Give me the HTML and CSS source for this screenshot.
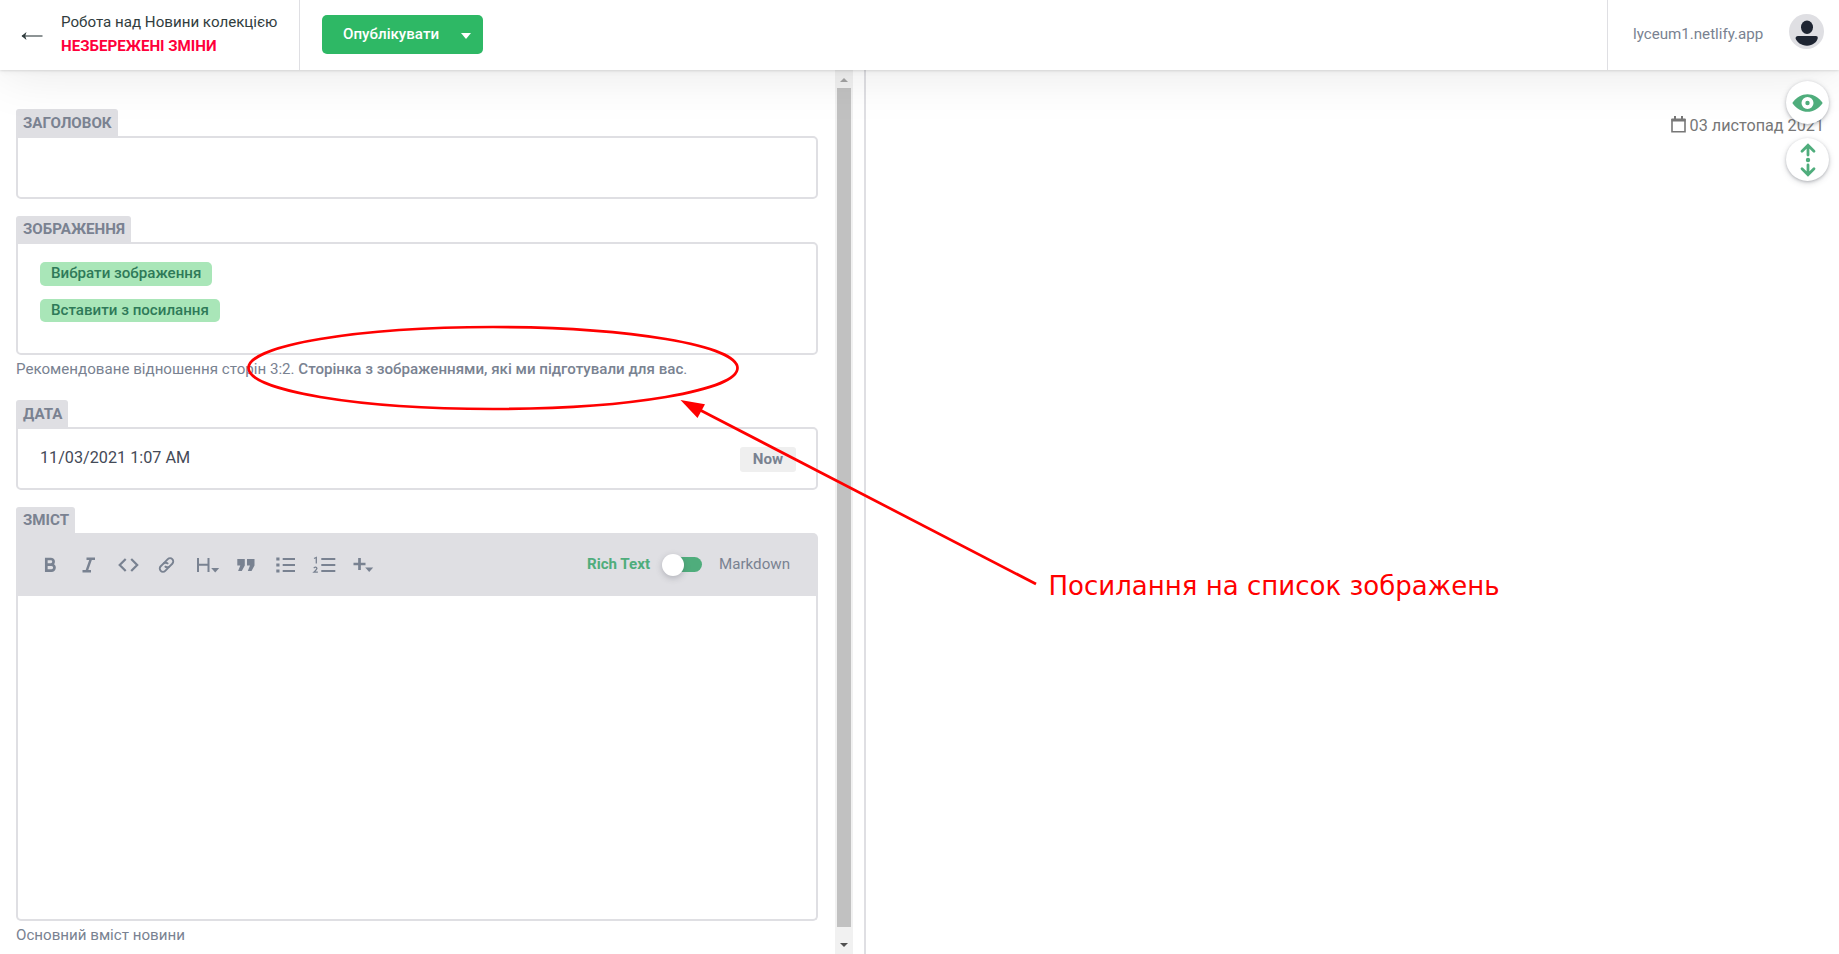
FILE: index.html
```html
<!DOCTYPE html>
<html lang="uk">
<head>
<meta charset="utf-8">
<title>Новини</title>
<link rel="stylesheet" href="styles.css">
</head>
<body>
<div class="app">
  <header class="topbar">
    <a class="back">
      <svg class="back-arrow" width="22" height="10" viewBox="0 0 22 10"><path d="M1 5H21.500" stroke="#313d3e" stroke-width="1.100" fill="none"/><path d="M.5 5L5.500 1L4.200 5L5.500 9Z" fill="#313d3e"/></svg>
      <span class="back-text">
        <span class="collection">Робота над Новини колекцією</span>
        <span class="unsaved">НЕЗБЕРЕЖЕНІ ЗМІНИ</span>
      </span>
    </a>
    <div class="actions">
      <button class="publish">Опублікувати<span class="caret"></span></button>
    </div>
    <div class="meta">
      <span class="site">lyceum1.netlify.app</span>
      <svg class="avatar" width="35" height="35" viewBox="0 0 35 35"><circle cx="17.5" cy="17.5" r="17.5" fill="#dfdfe3"/><ellipse cx="18" cy="13.2" rx="6" ry="6.7" fill="#1e2532"/><path d="M9 22h18q2 0 1.8 2c-.8 4-5 7.7-10.800 7.700S7.600 28 6.600 24.500Q6.500 22 9 22z" fill="#1e2532"/></svg>
    </div>
  </header>
  <main class="panes">
    <section class="editor">
      <div class="field title-field">
        <label class="tab">ЗАГОЛОВОК</label>
        <div class="box"></div>
      </div>
      <div class="field image-field">
        <label class="tab">ЗОБРАЖЕННЯ</label>
        <div class="box image-box">
          <button class="chip">Вибрати зображення</button>
          <button class="chip chip-link">Вставити з посилання</button>
        </div>
        <p class="hint">Рекомендоване відношення сторін 3:2. <b>Сторінка з зображеннями, які ми підготували для вас</b>.</p>
      </div>
      <div class="field date-field">
        <label class="tab">ДАТА</label>
        <div class="box date-box"><span>11/03/2021 1:07 AM</span><button class="now">Now</button></div>
      </div>
      <div class="field body-field">
        <label class="tab">ЗМІСТ</label>
        <div class="toolbar">
          <svg class="tools" width="340" height="20" viewBox="0 0 340 20" fill="none" stroke="#798291" stroke-width="2">
            <path d="M3.300 4H7.800a2.800 2.800 0 0 1 0 5.600H3.300zM3.300 9.600H8.500a3 3 0 0 1 0 6H3.300z" stroke-width="2.700"/>
            <path d="M43.500 3.700h8.500M39.500 16.300h8.500M48 3.700L43.500 16.300" stroke-width="2.500"/>
            <path d="M82.700 4L76.700 10L82.700 16M88.200 4L94.200 10L88.200 16" stroke-width="2.200"/>
            <g transform="translate(123.500 10) rotate(-45)" stroke-width="1.900"><path d="M1.500 3.200H-5a3.200 3.200 0 0 1 0-6.400H-1.200a3.200 3.200 0 0 1 3.100 3.600"/><path d="M-1.500-3.200H5a3.200 3.200 0 0 1 0 6.400H1.200a3.200 3.200 0 0 1-3.100-3.600"/></g>
            <path d="M155 3v14M165.500 3v14M155 9.700h10.500"/>
            <path d="M168.200 13h8l-4 4.500z" fill="#798291" stroke="none"/>
            <path d="M194.300 4h7.500v6.500l-3 5.500h-3.700l2.200-5.500h-3zM204 4h7.500v6.500l-3 5.500h-3.700l2.200-5.500h-3z" fill="#798291" stroke="none"/>
            <path d="M239.700 4h12.300M239.700 10h12.300M239.700 16h12.300"/>
            <path d="M233.300 4h3.200M233.300 10h3.200M233.300 16h3.200" stroke-width="3"/>
            <path d="M278.300 4h14M278.300 10h14M278.300 16h14"/>
            <path d="M271 3.500L273.300 2.500V8.500M270.700 13q2.500-1.700 3.200.3q0 1-3 3.900h4" stroke-width="1.300"/>
            <path d="M310.500 9h12M316.500 3v12" stroke-width="2.700"/>
            <path d="M322.200 12.500h8l-4 4.500z" fill="#798291" stroke="none"/>
          </svg>
          <div class="mode">
            <b class="rich">Rich Text</b>
            <span class="switch"><span class="knob"></span></span>
            <span class="markdown">Markdown</span>
          </div>
        </div>
        <div class="content"></div>
        <p class="hint">Основний вміст новини</p>
      </div>
    </section>
    <div class="scrollbar">
      <svg width="8" height="4" viewBox="0 0 8 4"><path d="M0 4L4 0L8 4z" fill="#a3a3a3"/></svg>
      <span class="thumb"></span>
      <svg width="8" height="4" viewBox="0 0 8 4"><path d="M0 0H8L4 4z" fill="#505050"/></svg>
    </div>
    <section class="preview">
      <div class="date">
        <svg width="15" height="17" viewBox="0 0 15 17"><path d="M1 3.800h13V15.800H1z" fill="none" stroke="#777" stroke-width="1.600"/><path d="M.5 2.500h14v3H.5zM3 0h2v3H3zM10 0h2v3h-2z" fill="#777"/></svg>
        <span class="date-text">03 листопад 2021</span>
      </div>
    </section>
  </main>
  <div class="shade"></div>
  <div class="controls">
    <button class="round"><svg width="31" height="18" viewBox="0 0 31 18"><path d="M.3 9C8-2.700 23-2.700 30.700 9C23 20.700 8 20.700.3 9z" fill="#4fad7c"/><circle cx="15.500" cy="9" r="4.100" fill="none" stroke="#fff" stroke-width="3.800"/></svg></button>
    <button class="round"><svg width="16" height="34" viewBox="0 0 16 34"><path d="M8 12V2.500M2 8.300L8 2.300L14 8.300M8 22V31M2 25.700L8 31.700L14 25.700" fill="none" stroke="#4fad7c" stroke-width="2.800" stroke-linecap="round"/><circle cx="8" cy="17" r="2.200" fill="#4fad7c"/></svg></button>
  </div>
  <svg class="annotation" width="1839" height="954" viewBox="0 0 1839 954">
    <ellipse cx="493" cy="368" rx="244.500" ry="41" fill="none" stroke="red" stroke-width="2.700"/>
    <path d="M700 410L1036 584" stroke="red" stroke-width="2.700"/>
    <path d="M680.500 400L705 404.300L697.500 418z" fill="red"/>
    <text class="note" x="1048.500" y="595" textLength="451" lengthAdjust="spacingAndGlyphs">Посилання на список зображень</text>
  </svg>
</div>
</body>
</html>
```
FILE: styles.css
```css
* { box-sizing: border-box; }
body { margin: 0; background: #fff; font-family: Roboto, "Noto Sans", sans-serif; color: #798291; }
button { font: inherit; border: 0; padding: 0; margin: 0; color: inherit; }
p { margin: 0; }
.app { position: relative; width: 1839px; height: 954px; overflow: hidden; display: flex; flex-direction: column; }

.topbar { height: 70px; display: flex; flex: none; background: #fff; position: relative; z-index: 3; }
.back { width: 300px; border-right: 1px solid #dfdfe3; display: flex; padding: 12px 0 0 21px; }
.back-arrow { margin: 19px 18px 0 0; flex: none; }
.back-text { display: flex; flex-direction: column; white-space: nowrap; }
.collection { color: #313d3e; font-size: 15.13px; line-height: 21px; }
.unsaved { color: #ff003b; font-size: 15.13px; line-height: 24px; font-weight: 700; margin-top: 1px; }
.actions { flex: 1; padding: 15px 0 0 22px; }
.publish { width: 161px; height: 39px; border-radius: 5px; background: #2eb865; color: #fff; font-size: 15.13px; font-weight: 500; line-height: 38px; padding: 0 12px 0 21px; display: flex; justify-content: space-between; }
.caret { border: 5px solid transparent; border-top: 6px solid #fff; border-bottom: 0; margin-top: 18px; }
.meta { width: 232px; border-left: 1px solid #dfdfe3; display: flex; justify-content: space-between; padding: 14px 15px 0 25px; font-size: 15.13px; }
.site { line-height: 40px; }

.panes { flex: 1; display: flex; min-height: 0; }
.editor { width: 835px; padding: 39px 17px 0 16px; flex: none; display: flex; flex-direction: column; font-size: 15.13px; }
.field { display: flex; flex-direction: column; align-items: stretch; }
.tab { align-self: flex-start; height: 27px; padding: 0 6px 0 7px; line-height: 28px; background: #dfdfe3; border-radius: 3px 3px 0 0; font-weight: 700; color: #7a8291; }
.box { height: 63px; border: 2px solid #dfdfe3; border-radius: 0 5px 5px 5px; background: transparent; }
.image-field { margin-top: 17px; }
.image-field .tab { height: 26px; line-height: 26px; }
.image-box { height: 113px; display: flex; flex-direction: column; align-items: flex-start; padding: 18px 0 0 22px; }
.chip { height: 24px; line-height: 22px; padding: 0 11px; border-radius: 5px; background: #a9e6b8; color: #2f7a58; font-weight: 500; display: flex; }
.chip-link { height: 23px; margin-top: 13px; }
.hint { line-height: 18px; margin-top: 5px; white-space: nowrap; }
.hint b { font-weight: 500; }
.date-field { margin-top: 22px; }
.date-box { display: flex; justify-content: space-between; padding: 18px 20px 0 22px; font-size: 16.2px; line-height: 22px; color: #444a57; }
.now { width: 56px; height: 25px; border-radius: 3px; background: #efefef; color: #798291; font-size: 15.13px; font-weight: 700; line-height: 25px; }
.body-field { margin-top: 17px; }
.body-field .tab { height: 26px; line-height: 26px; }
.toolbar { height: 63px; background: #dfdfe3; border-radius: 0 5px 0 0; display: flex; justify-content: space-between; padding: 22px 28px 0 27px; }
.mode { display: flex; line-height: 19px; }
.rich { color: #4fad7c; font-weight: 700; }
.switch { width: 40px; height: 15px; margin: 2px 17px 0 12px; border-radius: 8px; background: linear-gradient(to right, transparent 10px, #4fad7c 10px); }
.knob { display: block; width: 22px; height: 22px; border-radius: 50%; background: #fff; margin-top: -3px; box-shadow: 0 2px 6px rgba(68,74,87,.3); }
.content { height: 325px; border: 2px solid #dfdfe3; border-top: 0; border-radius: 0 0 5px 5px; }

.scrollbar { width: 18px; flex: none; background: #f1f1f1; display: flex; flex-direction: column; align-items: center; padding-top: 8px; }
.thumb { width: 14px; height: 839px; flex: none; margin: 6px 0 16px; background: #c1c1c1; }
.preview { margin-left: 11px; flex: 1; border-left: 2px solid #dfdfe3; padding: 46px 15px 0 0; }
.date { display: flex; justify-content: flex-end; gap: 4px; color: #777; font-size: 16.2px; line-height: 20px; }

.shade { position: absolute; z-index: 2; left: 0; right: 0; top: 20px; height: 50px; pointer-events: none; box-shadow: 0 1px 2px rgba(0,0,0,.1), 0 2px 6px rgba(0,0,0,.04), 0 2px 54px rgba(0,0,0,.1); }
.controls { position: absolute; z-index: 2; left: 1786px; top: 81px; display: flex; flex-direction: column; gap: 14px; }
.round { width: 43px; height: 43px; border-radius: 50%; background: #fff; display: flex; align-items: center; justify-content: center; box-shadow: 0 2px 6px rgba(68,74,87,.2), 0 1px 3px rgba(68,74,87,.3); }
.annotation { position: absolute; z-index: 5; left: 0; top: 0; pointer-events: none; }
.note { fill: red; font-family: "DejaVu Sans", sans-serif; font-size: 26.700px; }
```
